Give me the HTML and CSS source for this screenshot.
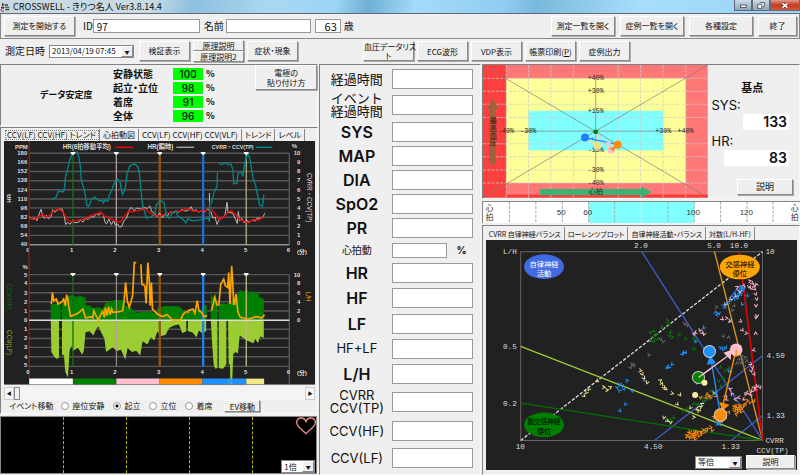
FILE: index.html
```html
<!DOCTYPE html>
<html lang="ja">
<head>
<meta charset="utf-8">
<meta name="viewport" content="width=device-width, initial-scale=1">
<title>CROSSWELL - きりつ名人</title>
<link rel="stylesheet" href="styles.css">
</head>
<body>
<header class="titlebar">
  <svg class="app-icon" viewBox="0 0 30 30" aria-hidden="true"><path d="M6 4h5v8H6zM14 7h10v4H14zM3 14h9v4H3zM14 14h14v3H14zM16 20h12v5H16z" fill="#3c3c3c"/><path d="M12 20a5 5 0 1 0 0 7" fill="none" stroke="#d01818" stroke-width="3"/></svg>
  <h1>CROSSWELL - きりつ名人 Ver3.8.14.4</h1>
  <div class="window-buttons">
    <button type="button" aria-label="最小化"><svg viewBox="0 0 18 11"><rect x="6" y="5" width="7" height="3" fill="#fff" stroke="#445" /></svg></button>
    <button type="button" aria-label="元に戻す"><svg viewBox="0 0 18 11"><path d="M8 2h5v5h-2M5 4h5v5H5z" fill="#fff" stroke="#445"/></svg></button>
    <button type="button" class="close" aria-label="閉じる"><svg viewBox="0 0 30 11"><path d="M12 3l6 5M18 3l-6 5" stroke="#533" stroke-width="4"/><path d="M12 3l6 5M18 3l-6 5" stroke="#fff" stroke-width="2"/></svg></button>
  </div>
</header>

<div class="toolbar patient">
  <button type="button" class="btn start">測定を開始する</button>
  <label for="pid">ID</label><input id="pid" class="id" value="97">
  <label for="pname">名前</label><input id="pname" class="name">
  <input id="age" class="age" value="63"><label for="age">歳</label>
  <span class="spacer"></span>
  <button type="button" class="btn wide">測定一覧を開く</button>
  <button type="button" class="btn wide">症例一覧を開く</button>
  <button type="button" class="btn wide">各種設定</button>
  <button type="button" class="btn quit">終了</button>
</div>

<div class="toolbar actions">
  <label for="when">測定日時</label>
  <span class="select when"><select id="when"><option>2013/04/19 07:45</option></select></span>
  <button type="button" class="btn">検証表示</button>
  <div class="stack"><button type="button" class="btn">原理説明</button><button type="button" class="btn">原理説明2</button></div>
  <button type="button" class="btn">症状・現象</button>
  <div class="reports">
    <button type="button" class="btn">血圧データリス<br>ト</button>
    <button type="button" class="btn">ECG波形</button>
    <button type="button" class="btn">VDP表示</button>
    <button type="button" class="btn">帳票印刷(<u>P</u>)</button>
    <button type="button" class="btn">症例出力</button>
  </div>
</div>

<main class="board">
  <section class="left">
    <div class="stability panel">
      <h2>データ安定度</h2>
      <table>
        <tr><th scope="row">安静状態</th><td>100</td><td>%</td></tr>
        <tr><th scope="row">起立・立位</th><td>98</td><td>%</td></tr>
        <tr><th scope="row">着席</th><td>91</td><td>%</td></tr>
        <tr><th scope="row">全体</th><td>96</td><td>%</td></tr>
      </table>
      <button type="button" class="btn">電極の<br>貼り付け方</button>
    </div>
    <div class="trend panel">
      <div class="tabs" role="tablist">
        <button type="button" role="tab" aria-selected="true">CCV(LF) CCV(HF) トレンド</button>
        <button type="button" role="tab">心拍動図</button>
        <button type="button" role="tab">CCV(LF) CCV(HF) CCV(VLF)</button>
        <button type="button" role="tab">トレンド</button>
        <button type="button" role="tab">レベル</button>
      </div>
      <svg class="chart" viewBox="12 3 939 735" role="img" aria-label="トレンド">
        <rect x="12" y="3" width="939" height="735" fill="#212121"/>
        <g class="tick">
          <text x="45" y="26">PPM</text><text x="880" y="24">%</text>
          <text x="189" y="27" class="legend">HR(8拍移動平均)</text>
          <text x="445" y="27" class="legend">HR(瞬時)</text>
          <text x="639" y="27" class="name">CVRR・CCV(TP)</text>
        </g>
        <path d="M348 22h54" stroke="#f00" stroke-width="4"/><path d="M532 22h54" stroke="#aaa" stroke-width="4"/><path d="M772 22h50" stroke="#088" stroke-width="4"/>
        <path class="grid" d="M88 40H873M88 68H873M88 95H873M88 123H873M88 150H873M88 178H873M88 205H873M88 233H873M88 260H873M88 288H873M88 316H873M873 40V316"/>
        <path d="M88 316H873" stroke="#aaa" stroke-width="3"/>
        <g class="tick end">
          <text x="82" y="46">180</text><text x="82" y="73">166</text><text x="82" y="101">152</text><text x="82" y="128">138</text><text x="82" y="156">124</text><text x="82" y="183">110</text><text x="82" y="211">96</text><text x="82" y="238">82</text><text x="82" y="266">68</text><text x="82" y="293">54</text><text x="82" y="319">40</text>
          <text x="906" y="46">10</text><text x="906" y="73">9</text><text x="906" y="101">8</text><text x="906" y="128">7</text><text x="906" y="156">6</text><text x="906" y="183">5</text><text x="906" y="211">4</text><text x="906" y="238">3</text><text x="906" y="266">2</text><text x="906" y="293">1</text><text x="906" y="318">0</text>
        </g>
        <g class="tick mid">
          <text x="84" y="338">0</text><text x="216" y="338">1</text><text x="347" y="338">2</text><text x="479" y="338">3</text><text x="610" y="338">4</text><text x="741" y="338">5</text><text x="870" y="338">6</text><text x="911" y="343">(分)</text>
          <text transform="translate(34 176) rotate(-90)">HR</text>
          <text transform="translate(926 174) rotate(90)" class="side">CVRR・CCV(TP)</text>
        </g>
        <g fill="none">
          <path d="M88 3V720" stroke="#8b1a1a" stroke-width="4"/>
          <path d="M220 40V316" stroke="#157015" stroke-width="4"/>
          <path d="M351 40V316" stroke="#b09aa0" stroke-width="4"/>
          <path d="M482 40V316" stroke="#905510" stroke-width="7"/>
          <path d="M613 40V316" stroke="#1c70cc" stroke-width="7"/>
          <path d="M743 40V316" stroke="#b4ac78" stroke-width="4"/>
          <path stroke="#bbb" stroke-width="3" d="M88 232l8 7 9-3 6 8 8-24 5-11 5 22 6 6 5-10 6 11 8-7 5-21 6 8 7-6 9-4 7 1 6 22 4 24 5-6 9 5 6-10 8 6 12-2 5-8 7 8 9-12 7 4 9-9 8 2 8-11 8 5 6-10 7 10 5 22 5 4 6-15 8 17 7-12 5 14 7-3 6 9 6-2 8-19 7-6 8-25 6-8 8 10 9-8 10 4 10-7 10 5 9-8 7 18 9 5 6 10 7-12 9 15 7-11 8 6 8-13 10 3 8-6 8 4 10-9 9 6 12-4 6-10 7 14 8-5 8 8 9-5 9 4 9-8 6 3V160V246"/>
          <path stroke="#bbb" stroke-width="3" d="M636 215l6 20 7-2 6 22 5-12 7-6 6-3 6-8 6-38 3 32 6-2 9 4 8 18 5 12 3-36 4 28 6-8 8 14 6-8 9 6 9-7 9 4 5-9 8 1 9-2 7-14"/>
          <path stroke="red" stroke-width="4" d="M88 235L105 240 120 228 130 225 140 232 150 228 160 215 175 208 185 212 195 225 203 240 215 247 230 242 250 240 270 230 290 222 305 218 315 230 328 235 340 240 355 247 365 246 375 230 388 215 400 217 420 213 435 207 450 218 465 228 485 229 500 222 520 217 545 214 565 206 580 214 600 216 625 212M638 208L650 225 660 240 675 232 690 216 700 214 710 225 722 238 735 245 750 250 765 240 780 242 795 232"/>
          <path stroke="#088" stroke-width="4" d="M157 180L170 172 175 155 192 156 195 140 197 115 207 75 212 55 220 38 232 36 238 52 243 85 245 120 253 145 257 165 262 197 268 200 275 182 285 172 295 180 300 184 308 182 312 190 318 180 325 185 330 165 338 148 345 130 355 118 362 125 366 150 370 165 378 145 383 103 392 78 405 72 415 80 420 95 424 140 428 180 432 205 442 235 455 232 467 222 472 195 485 183 495 190 503 230 510 237 520 220 530 215 537 230 550 238 557 245 560 250 567 238 580 244 600 242 628 236 632 245 633 185M638 192L645 160 655 140 656 98M660 70L668 74 684 68 687 75 697 73 703 90 705 132 715 130 718 100 728 97 733 110 738 70 748 40 755 60 762 110 772 140 779 175 783 195 792 200 796 165"/>
        </g>
        <g transform="translate(0 345)">
          <path class="grid" d="M88 61H873M88 88H873M88 116H873M88 143H873M88 171H873M88 226H873M88 254H873M88 281H873M88 309H873M88 338H873M873 61V392"/>
          <path fill="green" d="M153 198V150L183 148V198H187V150L200 130 212 123 230 128 245 126 258 130 260 155 270 153 280 162 300 160 310 165 320 143 330 146 345 138 370 138 378 155 395 162 410 177 440 172 470 178 475 163 500 156 540 157 550 165 555 178 580 170 612 165 614 155 624 153V198M636 198V115L641 130 650 118 656 150V198M660 198V150L672 148 685 150 700 140 720 120 722 107 735 112 745 105 755 118 760 108 770 120 780 112 783 130 796 135V198"/>
          <path fill="#9acd32" d="M153 198L155 295 163 308 170 315 178 312V198M187 198V302L193 305 197 355 205 372 210 290 215 275 220 292 235 282 248 303 253 290 258 235 270 232 282 245 290 225 297 218 305 235 315 255 320 295 340 280 352 292 365 288 378 318 385 283 398 295 411 291 423 305 430 262 445 272 455 250 465 260 475 233 485 247 500 243 510 222 525 215 540 212 550 238 562 232V198M567 198V232L580 235 593 250 600 230 610 238 622 232V198M636 198L640 270 645 335 650 345 656 343V198M660 198V343L673 345 683 332V198M688 198L690 335 694 330 695 392H700L704 300 712 295 718 300 723 245 745 260 765 268 770 255 778 268 785 248 796 252V198"/>
          <g fill="none"><path d="M220 61V338" stroke="#157015" stroke-width="4"/><path d="M351 61V338" stroke="#b09aa0" stroke-width="3"/><path d="M482 61V338" stroke="#905510" stroke-width="7"/><path d="M613 61V338" stroke="#1c80e8" stroke-width="7"/><path d="M743 61V338" stroke="#c4bc80" stroke-width="4"/>
          <path d="M88 199H873" stroke="#ddd" stroke-width="4"/>
          <path stroke="orange" stroke-width="5" d="M155 150L158 115 162 140 170 135 175 150 185 145 192 135 197 155 201 122 205 135 207 155 213 187 225 182 235 178 250 165 258 192 275 188 280 192 283 170 290 186 297 198 305 180 310 172 315 190 318 160 323 185 328 158 332 182 337 165 340 175 360 173 370 170 374 145 379 85 384 140 390 160 400 125 404 50 405 25H411M425 30L428 90 437 95 441 148 446 25 451 90 453 155 457 85 460 165 475 180 490 188 505 182 520 198 545 198 553 180 563 172M568 178V170L582 165 588 178 595 140 600 170 608 175 615 188 625 185M638 170L648 130 655 155M660 155L666 90 675 75 680 95 687 100 690 55 694 150 699 35 702 80 705 150 708 150 712 120 718 175 725 190 750 195 775 188 790 192 798 182"/></g>
          <g><path fill="#fff" d="M88 375h132v17H88z"/><path fill="green" d="M220 375h131v17H220z"/><path fill="#ffc0cb" d="M351 375h129v17H351z"/><path fill="#ff8c00" d="M480 375h131v17H480z"/><path fill="#1e90ff" d="M611 375h132v17H611z"/><path fill="#f0e68c" d="M743 375h54v17h-54z"/><path d="M691 375v17M699 375v17" stroke="#7ab052" stroke-width="3"/></g>
          <g class="tick end"><text x="84" y="43">%</text><text x="82" y="67">5</text><text x="82" y="94">4</text><text x="82" y="122">3</text><text x="82" y="149">2</text><text x="82" y="177">1</text><text x="82" y="205">0</text><text x="82" y="232">1</text><text x="82" y="260">2</text><text x="82" y="287">3</text><text x="82" y="315">4</text><text x="82" y="341">5</text>
          <text x="906" y="67">10</text><text x="906" y="94">8</text><text x="906" y="122">6</text><text x="906" y="149">4</text><text x="906" y="177">2</text><text x="906" y="205">0</text></g>
          <g class="tick mid"><text x="84" y="361">0</text><text x="216" y="361">1</text><text x="347" y="361">2</text><text x="479" y="361">3</text><text x="610" y="361">4</text><text x="741" y="361">5</text><text x="870" y="361">6</text><text x="911" y="363">(分)</text>
          <text class="side hf" transform="translate(22 127) rotate(90)">CCV(HF)</text><text class="side lf" transform="translate(22 266) rotate(90)">CCV(LF)</text><text class="side lh" transform="translate(924 128) rotate(90)">L/H</text></g>
        </g>
        <path fill="#fff" d="M213 36h14v4l-7 6-7-6zM344 36h14v4l-7 6-7-6zM475 36h14v4l-7 6-7-6zM606 36h14v4l-7 6-7-6zM736 36h14v4l-7 6-7-6zM213 401h14v4l-7 6-7-6zM344 401h14v4l-7 6-7-6zM475 401h14v4l-7 6-7-6zM606 401h14v4l-7 6-7-6zM736 401h14v4l-7 6-7-6z"/>
      </svg>
      <div class="scroller"><button type="button" aria-label="左へ">◀</button><input type="range" aria-label="表示位置" value="0"><button type="button" aria-label="右へ">▶</button></div>
      <div class="events" role="radiogroup" aria-labelledby="ev-title">
        <span id="ev-title">イベント移動</span>
        <label><input type="radio" name="ev">座位安静</label>
        <label><input type="radio" name="ev" checked>起立</label>
        <label><input type="radio" name="ev">立位</label>
        <label><input type="radio" name="ev">着席</label>
        <button type="button" class="btn">EV移動</button>
      </div>
    </div>
    <div class="wave">
      <i></i><i></i><i></i><i></i>
      <svg class="heart" viewBox="0 0 60 54" aria-hidden="true"><path d="M30 50L8 29C-4 15 4 3 15 3c9 0 14 6 15 13C31 9 36 3 45 3c11 0 19 12 7 26z" fill="none" stroke="#e88a88" stroke-width="4"/></svg>
      <span class="select zoom"><select aria-label="波形倍率"><option>1倍</option></select></span>
    </div>
  </section>

  <section class="readings panel">
    <label for="r1">経過時間</label><input id="r1">
    <label for="r2">イベント<br>経過時間</label><input id="r2">
    <label for="r3" class="big">SYS</label><input id="r3">
    <label for="r4" class="big">MAP</label><input id="r4">
    <label for="r5" class="big">DIA</label><input id="r5">
    <label for="r6" class="big">SpO2</label><input id="r6">
    <label for="r7" class="big">PR</label><input id="r7">
    <label for="r8" class="small">心拍動</label><span class="percent"><input id="r8"><b>%</b></span>
    <label for="r9" class="big">HR</label><input id="r9">
    <label for="r10" class="big">HF</label><input id="r10">
    <label for="r11" class="big">LF</label><input id="r11">
    <label for="r12">HF+LF</label><input id="r12">
    <label for="r13" class="big">L/H</label><input id="r13">
    <label for="r14">CVRR<br>CCV(TP)</label><input id="r14">
    <label for="r15">CCV(HF)</label><input id="r15">
    <label for="r16">CCV(LF)</label><input id="r16">
  </section>

  <section class="right">
    <div class="response panel">
      <svg class="chart" viewBox="8 9 676 399" role="img" aria-label="心拍と最高血圧">
        <rect x="8" y="9" width="676" height="399" fill="#ff7878"/><rect x="8" y="9" width="70" height="399" fill="#ff4040"/><rect x="78" y="399" width="606" height="9" fill="#ff3838"/>
        <rect x="78" y="49" width="540" height="315" fill="#ffff99"/><rect x="145" y="147" width="405" height="119" fill="#80ffff"/>
        <path d="M78 9V408M145 9V408M212 9V408M280 9V408M415 9V408M482 9V408M550 9V408M618 9V408M8 49H684M8 88H684M8 127H684M8 167H684M8 246H684M8 285H684M8 325H684M8 364H684" stroke="#ccc" stroke-width="3" stroke-dasharray="9 4" opacity=".75"/>
        <path d="M8 9L684 408M684 9L8 408M78 208H618M347 49V364" stroke="#777" stroke-width="2"/>
        <path d="M178 382H483V374L516 391 483 409V401H178z" fill="#3cb371"/>
        <path d="M27 309V141H19L37 110 55 141H46V309z" fill="#a0623c"/>
        <g class="quad"><text x="347" y="54">+40%</text><text x="347" y="94">+30%</text><text x="347" y="153">+15%</text><text x="347" y="270">-15%</text><text x="347" y="331">-30%</text><text x="347" y="370">-40%</text><text x="77" y="214">-40%</text><text x="144" y="214">-30%</text><text x="550" y="214">+30%</text><text x="617" y="214">+40%</text><text x="347" y="398" class="jp">心拍</text><text x="36" y="209" class="vert">最高血圧</text></g>
        <path d="M347 210L352 252M347 210L393 264" stroke="#fbb" stroke-width="3"/><path d="M316 228L352 252" stroke="#f0e68c" stroke-width="4"/><path d="M316 228L413 248" stroke="#1e90ff" stroke-width="4"/>
        <circle cx="347" cy="210" r="7" fill="green"/><circle cx="352" cy="252" r="12" fill="#f0e08c"/><circle cx="393" cy="264" r="11" fill="#ffc0cb"/><path d="M374 241l16 12 2-13z" fill="#ffc0cb"/><path d="M388 260l17-5-3 13z" fill="#f70"/><circle cx="413" cy="249" r="12" fill="#ff8c00"/><circle cx="315" cy="227" r="12" fill="#1e80ff"/><path d="M327 231l14-5-4 11z" fill="#1e80ff"/><path d="M329 240l5-8 8 11z" fill="#f0e68c"/>
      </svg>
      <div class="base">
        <h2>基点</h2>
        <div class="pair"><span>SYS:</span><output>133</output></div>
        <div class="pair hr"><span>HR:</span><output>83</output></div>
        <button type="button" class="btn">説明</button>
      </div>
    </div>
    <svg class="scale" viewBox="6 418 952 68" role="img" aria-label="心拍">
      <rect x="6" y="418" width="952" height="68" fill="#fff"/><rect x="325" y="420" width="316" height="66" fill="#80ffff"/>
      <path d="M88 420V486M167 420V486M246 420V486M325 420V486M403 420V486M562 420V486M641 420V486M720 420V486M799 420V486M877 420V486" stroke="#aaa" stroke-width="3" stroke-dasharray="9 4"/><path d="M482 420V486" stroke="#eee" stroke-width="3" stroke-dasharray="9 4"/>
      <path d="M7 486V419H958" fill="none" stroke="#888" stroke-width="4"/>
      <g class="scale-text"><text x="243" y="461">50</text><text x="322" y="461">60</text><text x="638" y="461">100</text><text x="797" y="461">120</text><text x="28" y="447">心</text><text x="28" y="474">拍</text><text x="942" y="447">心</text><text x="942" y="474">拍</text></g>
    </svg>
    <div class="balance panel">
      <div class="tabs" role="tablist">
        <button type="button" role="tab" aria-selected="true">CVRR 自律神経バランス</button>
        <button type="button" role="tab">ローレンツプロット</button>
        <button type="button" role="tab">自律神経活動・バランス</button>
        <button type="button" role="tab">対数(L/H-HF)</button>
      </div>
      <div class="plot">
      <svg class="chart" viewBox="17 48 933 690" role="img" aria-label="自律神経バランス">
        <defs>
          <g id="v"><path d="M-5-5L4-1-4 5" fill="none" stroke-width="3"/></g>
          <marker id="mg" overflow="visible" markerUnits="userSpaceOnUse" orient="auto"><use href="#v" stroke="#087808"/></marker>
          <marker id="mb" overflow="visible" markerUnits="userSpaceOnUse" orient="auto"><use href="#v" stroke="#1e90ff"/></marker>
          <marker id="mp" overflow="visible" markerUnits="userSpaceOnUse" orient="auto"><use href="#v" stroke="#f4b0c0"/></marker>
          <marker id="mo" overflow="visible" markerUnits="userSpaceOnUse" orient="auto"><use href="#v" stroke="#ff8c00"/></marker>
          <marker id="mk" overflow="visible" markerUnits="userSpaceOnUse" orient="auto"><use href="#v" stroke="#e8de90"/></marker>
          <marker id="mx" overflow="visible" markerUnits="userSpaceOnUse" orient="auto"><use href="#v" stroke="#666"/></marker>
        </defs>
        <rect x="17" y="48" width="933" height="690" fill="#212121"/>
        <g fill="none" stroke-width="4">
          <path d="M121 83H846V649H121z" stroke="#666" stroke-width="3"/>
          <path d="M121 649L846 83" stroke="#ddd" stroke-dasharray="10 5"/>
          <path d="M484 83L846 649M522 649L846 395M752 649L846 575" stroke="#3d5cc8"/>
          <path d="M121 367L846 649" stroke="#9acd32"/><path d="M121 537L846 649" stroke="#007000"/>
          <path d="M702 83L846 649" stroke="#e09818"/><path d="M776 83L846 649" stroke="#e00000" stroke-width="5"/>
        </g>
        <g class="cloud">
          <polyline class="x" points="700,245 708,250 760,245 755,258 728,336 745,340 612,298 620,303 540,345 548,352 510,350 505,392 455,420 460,424 450,430 765,395 775,405 785,410 795,400 780,415 790,425 770,418 800,412 785,398 760,410"/>
          <polyline class="g" points="540,305 560,290 565,300 545,310 520,320 510,325 525,332 515,340 530,345 520,352 570,325 566,335 575,340 597,332 615,345 640,340 645,350 640,375 720,430 735,440 745,432 750,445 728,462 715,470 740,480 722,485 690,500 700,510 660,520 670,530 650,540 664,545 640,540 680,525 610,560 620,555 580,580 570,588 560,590 575,595"/>
          <polyline class="b" points="703,262 715,268 710,272 706,265 730,245 738,240 733,250 745,235 752,228 760,225 755,218 765,214 772,218 762,208 775,205 782,210 770,198 778,192 786,195 780,188 790,192 775,212 784,200 768,222 800,215 785,240 748,290 670,310 645,352 610,385 605,390 615,385 575,420 565,428 560,430 492,468 418,480 425,485 410,490 430,495 418,500 440,470 455,500 435,540 418,560 720,372 735,370 728,375 745,440 650,475 660,465 710,600 715,595 722,590 718,600 700,580"/>
          <polyline class="p" points="800,180 808,172 815,178 820,185 828,182 805,188 812,192 790,185 822,195 825,210 828,225 826,245 829,275 826,280 820,377 770,190 778,202 765,215 750,225 735,240 725,285 738,283 748,292 780,292 785,318 797,328 826,328 658,318 665,326 670,330 645,325 640,330 810,420 815,430 812,440 820,450 830,485 820,490 838,490 825,495 815,500 810,510 800,505 795,510 790,525 775,520 765,525 755,510 750,495 700,505 707,515 735,515 738,525 685,375 660,385"/>
          <polyline class="k" points="450,455 480,440 485,450 490,462 500,475 350,470 325,495 318,505 310,515 370,490 380,498 390,490 545,480 540,470 550,490 556,495 575,508 598,512 590,540 660,550 665,540 650,555 630,550 640,580 655,560 550,580 560,590 570,595 548,600"/>
          <polyline class="o" points="610,630 618,635 625,628 632,632 640,625 636,640 645,635 650,628 655,635 630,640 640,632 648,622 628,622 644,644 622,638 660,625 668,618 675,622 680,615 690,610 695,618 665,628 700,580 735,578 725,590 745,565 760,550 770,558 765,545 775,548 780,555 772,562 768,570 778,545 785,550 762,560 775,555 782,562 768,552 790,545 795,540 800,530 808,535 680,510 675,520 685,515 690,520 660,520 820,530 790,555"/>
        </g>
        <g stroke-width="4">
          <path d="M687 380L720 573" stroke="#1e90ff"/><path d="M767 377L720 573" stroke="#ff8c00"/><path d="M654 460L767 377" stroke="#ffc0cb"/>
          <path d="M679 422l27-5-17-24z" fill="#1e90ff"/><path d="M716 534l31 8-21 18z" fill="#ff8c00"/><path d="M729 386l22 22 1-30z" fill="#ffc0cb"/>
          <circle cx="687" cy="382" r="18" fill="#1e90ff" stroke="#ccc" stroke-width="3"/><circle cx="767" cy="377" r="19" fill="#ffc0cb"/><circle cx="654" cy="460" r="18" fill="green" stroke="#ccc" stroke-width="3"/><circle cx="720" cy="573" r="19" fill="#ff8c00" stroke="#ccc" stroke-width="3"/><circle cx="672" cy="476" r="9" fill="#f8eda0"/><circle cx="644" cy="513" r="9" fill="#f8eda0"/><path d="M654 460L690 434" stroke="#ffc0cb"/><path d="M767 377V398" stroke="#ff8c00"/>
        </g>
        <ellipse cx="191" cy="128" rx="60" ry="37" fill="#4169e1"/><ellipse cx="778" cy="129" rx="60" ry="37" fill="orange"/><ellipse cx="191" cy="602" rx="60" ry="37" fill="#008000"/>
        <g class="oval"><text x="191" y="128" fill="#fff">自律神経</text><text x="191" y="157" fill="#fff">活動</text><text x="778" y="128">交感神経</text><text x="778" y="157">優位</text><text x="191" y="601" class="long">副交感神経</text><text x="191" y="629">優位</text></g>
        <g class="axis"><text x="68" y="90">L/H</text><text x="461" y="73">2.0</text><text x="680" y="73">5.0</text><text x="748" y="73">10.0</text><text x="855" y="90">10</text><text x="68" y="375">0.5</text><text x="68" y="546">0.2</text><text x="858" y="403">4.50</text><text x="858" y="582">1.33</text><text x="106" y="675">10</text><text x="491" y="675">4.50</text><text x="723" y="675">1.33</text><text x="855" y="658">CVRR</text><text x="828" y="687">CCV(TP)</text></g>
      </svg>
      <div class="plot-tools"><span class="select"><select aria-label="表示倍率"><option>等倍</option></select></span><button type="button" class="btn">説明</button></div>
      </div>
    </div>
  </section>
</main>
</body>
</html>
```
FILE: styles.css
```css
* { box-sizing: border-box; }
body {
  margin: 0;
  min-height: 100vh;
  display: flex;
  flex-direction: column;
  background: #efefef;
  color: #111;
  font: 8px/10px "Noto Sans CJK JP", "Liberation Sans", sans-serif;
  font-feature-settings: "palt";
}
button, input, select { font: inherit; font-feature-settings: inherit; color: inherit; margin: 0; border-radius: 0; }
h1, h2 { margin: 0; }
svg { display: block; }
input {
  height: 14px;
  padding: 0 3px;
  border: 1px solid #999;
  background: #fff;
  min-width: 0;
}
.btn {
  padding: 0 2px;
  background: #efefef;
  border: 1px solid;
  border-color: #fff #888 #888 #fff;
  box-shadow: 1px 1px 0 #aaa;
  text-align: center;
}
.panel { border: 1px solid; border-color: #808080 #f8f8f8 #f8f8f8 #808080; }

/* Title bar */
.titlebar {
  display: flex;
  align-items: center;
  height: 14px;
  gap: 3px;
  background: linear-gradient(100deg, #c9d8e0 0, #c6dbe6 19%, #8dc0de 24%, #a9d8f2 34%, #9bd4f5 42%, #6fb0d4 46%, #a4dafa 52%, #8fcdf0 63%, #79b9db 67%, #a8defc 80%, #98d2f2 100%);
  border-bottom: 1px solid #667;
}
.app-icon { width: 10px; height: 10px; }
.titlebar h1 { font-size: 9px; line-height: 12px; font-weight: 400; flex: 1; }
.window-buttons { display: flex; align-self: flex-start; height: 11px; }
.window-buttons button { width: 18px; padding: 0; border: 1px solid #667; border-top: 0; background: linear-gradient(#c8dbe6, #8fa9b8); }
.window-buttons svg { width: 100%; height: 9px; }
.window-buttons .close { width: 30px; background: linear-gradient(#e09a88, #c23a20 50%, #d8583c); }

/* Toolbars */
.toolbar { display: flex; align-items: center; }
.toolbar > label { font-size: 10px; line-height: 14px; }
.patient { height: 25px; padding: 0 2px 0 3px; border: 1px solid #888; border-top: 0; }
.patient .btn { height: 20px; }
.patient .start { width: 71px; margin-right: 8px; }
.patient .id { width: 107px; margin-right: 4px; text-decoration: underline; font-size: 10px; }
.patient .name { width: 85px; margin: 0 4px 0 2px; }
.patient .age { width: 26px; margin-right: 3px; font-size: 11px; text-align: right; }
.spacer { flex: 1; }
.patient .wide { width: 64px; margin-right: 5px; }
.patient .quit { width: 39px; }
.actions { height: 24px; padding-left: 5px; gap: 3px; }
.actions .btn { width: 51px; height: 20px; flex: none; }
.actions .when { width: 85px; margin: 0 2px 0 1px; }
.stack { display: flex; flex-direction: column; }
.actions .stack .btn { height: 11px; line-height: 9px; }
.reports { display: flex; gap: 3px; margin-left: 62px; }
.reports .btn { padding: 0; line-height: 9px; white-space: nowrap; }
.select { position: relative; display: inline-block; height: 13px; background: #fff; border: 1px solid #888; }
.select select { appearance: none; display: block; width: 100%; height: 100%; padding: 0 0 0 2px; border: 0; background: none; }
.select::after {
  content: "▼";
  position: absolute;
  top: 0; right: 0; bottom: 0;
  width: 10px;
  font-size: 5px;
  line-height: 10px;
  text-align: center;
  background: #efefef;
  border: 1px solid;
  border-color: #fff #888 #888 #fff;
  pointer-events: none;
}

/* Main board */
.board { flex: 1; display: grid; grid-template-columns: 319fr 162fr 319fr; column-gap: 1px; padding-top: 1px; }
.left, .right { display: flex; flex-direction: column; min-width: 0; }
.stability { display: grid; grid-template-columns: 112fr 142fr 62fr; height: 62px; margin-bottom: 1px; }
.stability h2 { font-size: 9px; align-self: center; padding-left: 39px; white-space: nowrap; }
.stability table { align-self: center; border-spacing: 0 2px; font-size: 10px; line-height: 12px; font-weight: 700; }
.stability th { width: 60px; padding: 0; text-align: left; white-space: nowrap; }
.stability td { padding: 0 0 0 3px; font-size: 9px; }
.stability td:nth-child(2) { width: 30px; padding: 0; background: #0f0; text-align: center; font: 500 10px/12px Inter, sans-serif; }
.stability .btn { height: 25px; }
.trend { padding: 0 2px 0 3px; }
.tabs { display: flex; height: 13px; padding-top: 1px; overflow: hidden; }
.tabs button { padding: 0 3px; border: 0; border-right: 1px solid #888; background: none; white-space: nowrap; flex: none; }
.trend [aria-selected="true"] { outline: 1px dotted #777; outline-offset: -2px; }
.chart { width: 100%; height: auto; }
.scroller { display: flex; height: 15px; padding-top: 2px; }
.scroller button { width: 10px; padding: 0; border: 1px solid #ccc; background: #f6f6f6; font-size: 5px; }
.scroller input { flex: 1; appearance: none; height: 13px; padding: 0; border: 0; background: #f4f4f4; }
.scroller input::-webkit-slider-thumb { appearance: none; width: 6px; height: 13px; background: #efefef; border: 1px solid #888; }
.events { display: flex; align-items: center; height: 13px; padding-left: 5px; gap: 8px; }
.events label { display: flex; align-items: center; gap: 3px; margin-right: 1px; }
.events input { appearance: none; width: 8px; height: 8px; padding: 0; border-radius: 50%; }
.events input:checked { background: radial-gradient(#000 0 1px, #fff 2px); }
.events .btn { width: 36px; height: 12px; line-height: 9px; margin-left: 3px; }
.wave {
  position: relative;
  flex: 1;
  display: grid;
  grid-template-columns: repeat(5, 1fr);
  margin: 2px 1px 1px 0;
  background: #000;
  border: 1px solid #888;
}
.wave i { border-right: 1px dashed #b5b500; }
.heart { position: absolute; top: 0; right: 0; width: 20px; height: 18px; }
.wave .zoom { position: absolute; right: 1px; bottom: 0; width: 34px; }

/* Readings */
.readings {
  display: grid;
  grid-template-columns: 66fr 82fr;
  grid-template-rows: 24fr 28fr 25fr 24fr 24fr 24fr 23fr 22fr 24fr 26fr 25fr 25fr 26fr 30fr 28fr 26fr;
  column-gap: 2px;
  align-items: center;
  padding: 2px 7px 3px 4px;
  font: 13px/13px Inter, "Noto Sans CJK JP", sans-serif;
  min-width: 0;
}
.readings label { text-align: center; white-space: nowrap; }
.readings input { width: 100%; height: 20px; }
.readings .big { font-size: 16px; line-height: 18px; font-weight: 600; }
.readings .small { font-size: 10px; }
.percent { display: flex; align-items: center; gap: 10px; font-size: 10px; }
.percent input { height: 15px; width: 55px; }

/* Response quadrant */
.response { display: grid; grid-template-columns: 226fr 92fr; height: auto; }
.base { display: flex; flex-direction: column; padding: 15px 10px 0 4px; font: 13px/16px Inter, "Noto Sans CJK JP", sans-serif; }
.base h2 { font-size: 11px; text-align: center; padding-left: 4px; }
.pair { display: flex; flex-direction: column; }
.pair span { line-height: 18px; }
.base output { align-self: flex-end; width: 46px; background: #fff; text-align: right; font-size: 14px; font-weight: 600; padding-right: 2px; }
.base .hr { margin-top: 2px; }
.base .hr output { width: 65px; }
.base .btn { width: 56px; height: 16px; margin: 13px -4px 0 auto; font-size: 9px; line-height: 12px; }
.scale { width: 100%; height: auto; margin: 2px 0; }
.balance { padding: 0 2px 0 3px; flex: 1; }
.balance .tabs { height: 14px; font-size: 7px; }
.plot { position: relative; }
.plot-tools { position: absolute; right: 2px; bottom: 1px; display: flex; align-items: center; gap: 4px; }
.plot-tools .select { width: 47px; }
.plot-tools .btn { width: 49px; height: 14px; }

/* Chart text and marks */
.grid { fill: none; stroke: #585858; stroke-width: 4; }
.tick { fill: #ddd; font: 700 18px "Liberation Sans", "Noto Sans CJK JP", sans-serif; }
.tick .legend { font-size: 19px; }
.tick .name { font-size: 16px; }
.end text { text-anchor: end; }
.mid text { text-anchor: middle; }
.tick .side { font: 400 19px "Liberation Sans", "Noto Sans CJK JP", sans-serif; }
.tick .hf { fill: #087008; }
.tick .lf { fill: #8ab82c; }
.tick .lh { fill: orange; }
.quad { fill: #222; font: 20px "Liberation Mono", "Noto Sans CJK JP", monospace; text-anchor: middle; }
.quad .jp { font-size: 22px; }
.quad .vert { font-size: 22px; fill: #511; writing-mode: vertical-rl; font-feature-settings: normal; }
.scale-text { fill: #333; font: 24px "Liberation Sans", "Noto Sans CJK JP", sans-serif; text-anchor: middle; }
.cloud polyline { fill: none; stroke: none; }
.cloud .x { marker-mid: url(#mx); }
.cloud .g { marker-mid: url(#mg); }
.cloud .b { marker-mid: url(#mb); }
.cloud .p { marker-mid: url(#mp); }
.cloud .k { marker-mid: url(#mk); }
.cloud .o { marker-mid: url(#mo); }
.oval { font: 22px "Noto Sans CJK JP", sans-serif; text-anchor: middle; }
.oval .long { font-size: 20px; }
.axis { fill: #ddd; font: 23px "Liberation Mono", monospace; }
```
